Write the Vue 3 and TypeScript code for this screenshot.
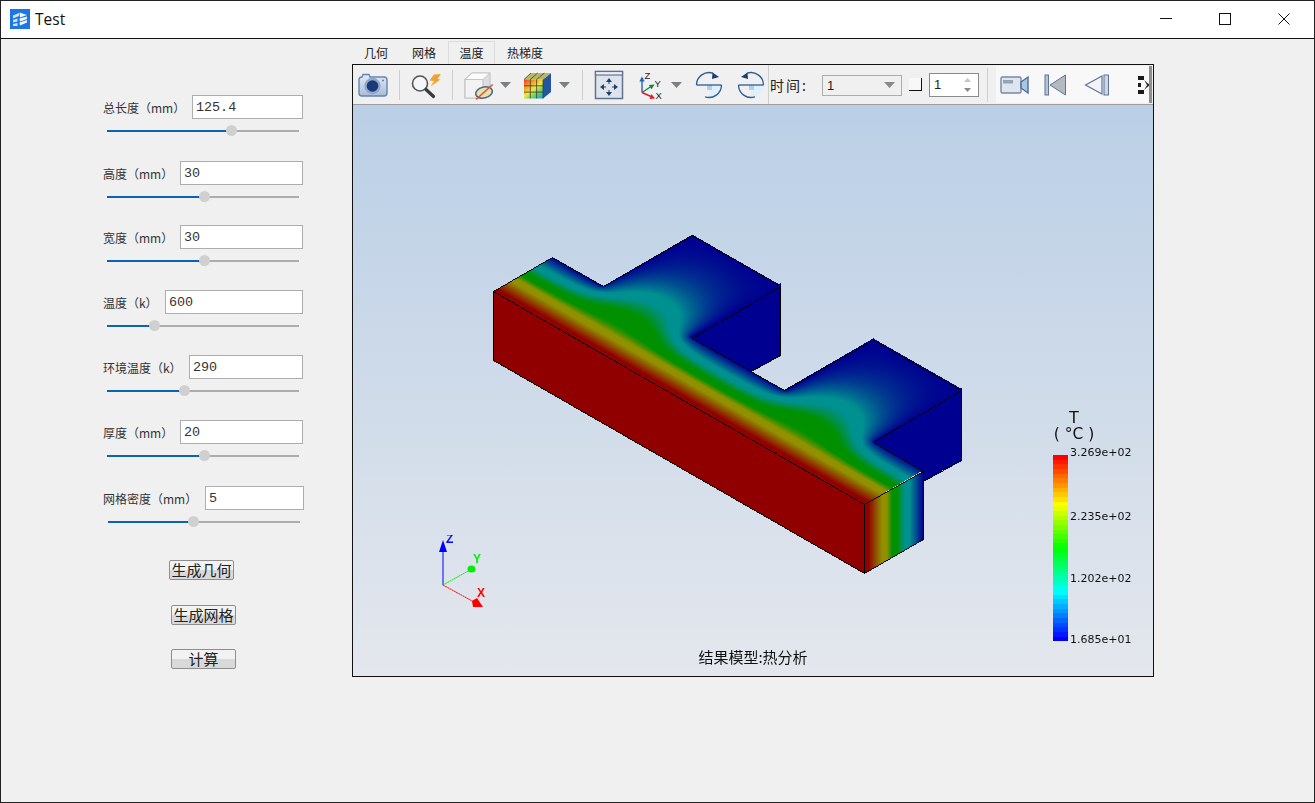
<script setup lang="ts">
import { onMounted, ref } from 'vue'

interface Param {
  label: string
  value: string
  inputWidth: number
  thumb: number
  gap: number
}

const params: Param[] = [
  { label: '总长度（mm）', value: '125.4', inputWidth: 111, thumb: 124, gap: 0 },
  { label: '高度（mm）', value: '30', inputWidth: 123, thumb: 97, gap: 24 },
  { label: '宽度（mm）', value: '30', inputWidth: 123, thumb: 97, gap: 22 },
  { label: '温度（k）', value: '600', inputWidth: 138, thumb: 47, gap: 23 },
  { label: '环境温度（k）', value: '290', inputWidth: 114, thumb: 77, gap: 23 },
  { label: '厚度（mm）', value: '20', inputWidth: 123, thumb: 97, gap: 23 },
  { label: '网格密度（mm）', value: '5', inputWidth: 99, thumb: 85, gap: 24 },
]

type Stops = [number, number[]][]

const LEGEND_STOPS: Stops = [
  [0, [255, 0, 0]],
  [0.26, [255, 255, 0]],
  [0.5, [0, 255, 0]],
  [0.74, [0, 255, 255]],
  [1, [0, 0, 255]],
]

const MODEL_STOPS: Stops = [
  [0, [144, 0, 0]],
  [0.07, [144, 0, 0]],
  [0.3, [144, 144, 0]],
  [0.38, [144, 144, 0]],
  [0.47, [0, 144, 0]],
  [0.55, [0, 144, 0]],
  [0.68, [0, 144, 144]],
  [0.76, [0, 144, 144]],
  [1, [0, 0, 144]],
]

function ramp(p: number, stops: Stops): number[] {
  const t = Math.min(1, Math.max(0, p))
  for (let i = 1; i < stops.length; i++) {
    if (t <= stops[i][0]) {
      const [a, ca] = stops[i - 1]
      const [b, cb] = stops[i]
      const k = (t - a) / (b - a)
      return ca.map((c, n) => c + (cb[n] - c) * k)
    }
  }
  return stops[stops.length - 1][1]
}

const legendBands = Array.from({ length: 40 }, (_, i) => {
  const c = ramp(i / 39, LEGEND_STOPS)
  return `rgb(${Math.round(c[0])},${Math.round(c[1])},${Math.round(c[2])})`
})

const legendLabels = [
  { text: '3.269e+02', gap: 0 },
  { text: '2.235e+02', gap: 47 },
  { text: '1.202e+02', gap: 45 },
  { text: '1.685e+01', gap: 44 },
]

const model = ref<HTMLCanvasElement | null>(null)

// Steady-state temperature over the top face, solved on a grid in (u, v) units of one bar width.
const N = 24
const NU = 150
const NV = 60
const SOURCE = 1.0

function inTabColumn(i: number): boolean {
  return (i > 20 && i < 56) || (i > 94 && i < 130)
}

function isFree(i: number, j: number): boolean {
  if (j <= 0 || j >= NV) return false
  if (j < N) return true
  return inTabColumn(i)
}

function solveField(): Float32Array {
  const W = NU + 1
  const f = new Float32Array(W * (NV + 1))
  for (let i = 0; i <= NU; i++) f[i] = 1
  const omega = 1.88
  const h2 = 1 / (N * N)
  for (let it = 0; it < 500; it++) {
    for (let j = 1; j < NV; j++) {
      const v = j / N
      const s = SOURCE * Math.max(0, 1 - Math.abs(v - 1.15) / 0.45)
      for (let i = 0; i <= NU; i++) {
        if (!isFree(i, j)) continue
        const l = f[j * W + (i === 0 ? 1 : i - 1)]
        const r = f[j * W + (i === NU ? NU - 1 : i + 1)]
        const d = f[(j - 1) * W + i]
        const t = f[(j + 1) * W + i]
        const c = j * W + i
        const q = inTabColumn(i) ? s * h2 : 0
        f[c] += omega * ((l + r + d + t + q) / 4 - f[c])
      }
    }
  }
  return f
}

function inPoly(x: number, y: number, pts: number[][]): boolean {
  let inside = false
  for (let i = 0, j = pts.length - 1; i < pts.length; j = i++) {
    const [xi, yi] = pts[i]
    const [xj, yj] = pts[j]
    if (yi > y !== yj > y && x < ((xj - xi) * (y - yi)) / (yj - yi) + xi) inside = !inside
  }
  return inside
}

function smooth(a: number, b: number, x: number): number {
  const t = Math.min(1, Math.max(0, (x - a) / (b - a)))
  return t * t * (3 - 2 * t)
}

function drawModel(canvas: HTMLCanvasElement) {
  const ctx = canvas.getContext('2d')
  if (!ctx) return
  const img = ctx.createImageData(canvas.width, canvas.height)
  const OX = 353
  const OY = 105
  const field = solveField()
  const W = NU + 1

  const sample = (u: number, v: number): number => {
    const x = Math.min(NU - 0.001, Math.max(0, u * N))
    const y = Math.min(NV - 0.001, Math.max(0, v * N))
    const i = Math.floor(x)
    const j = Math.floor(y)
    const a = x - i
    const b = y - j
    const solved =
      field[j * W + i] * (1 - a) * (1 - b) +
      field[j * W + i + 1] * a * (1 - b) +
      field[(j + 1) * W + i] * (1 - a) * b +
      field[(j + 1) * W + i + 1] * a * b
    // The bands near the heated front edge stay straight; only the far ones bend towards the tabs.
    const k = smooth(0.3, 0.8, v)
    return Math.max(0, 1 - v) * (1 - k) + solved * k
  }

  const set = (x: number, y: number, c: number[]) => {
    const k = ((y - OY) * canvas.width + (x - OX)) * 4
    img.data[k] = c[0]
    img.data[k + 1] = c[1]
    img.data[k + 2] = c[2]
    img.data[k + 3] = 255
  }

  const shade = (T: number): number[] => ramp(1 - T, MODEL_STOPS)

  const O = [493.3, 291.7]
  const eu = [59.36, 34.02]
  const ev = [59.4, -34.4]
  const det = eu[0] * ev[1] - eu[1] * ev[0]

  const front = [[493.3, 291.7], [864.3, 504.3], [864.3, 573.3], [493.3, 360]]
  const end = [[864.3, 504.3], [923.3, 471], [923.3, 539.3], [864.3, 573.3]]
  const side1 = [[692, 335], [780.7, 283.3], [780.7, 355], [745, 375], [692, 345]]
  const side2 = [[873.3, 439.3], [961.7, 387.7], [961.7, 460], [923.3, 481], [923.3, 474], [873.3, 446]]
  const navy = [0, 0, 144]
  const red = [144, 0, 0]

  for (let y = 232; y < 578; y++) {
    for (let x = 490; x < 966; x++) {
      const px = x + 0.5
      const py = y + 0.5
      const dx = px - O[0]
      const dy = py - O[1]
      const u = (dx * ev[1] - dy * ev[0]) / det
      const v = (eu[0] * dy - eu[1] * dx) / det
      const onBar = u >= 0 && u <= 6.25 && v >= 0 && v <= 1
      const onTab = v > 1 && v <= 2.5 && ((u >= 0.85 && u <= 2.35) || (u >= 3.9 && u <= 5.4))
      if (onBar || onTab) set(x, y, shade(sample(u, v)))
      else if (inPoly(px, py, front)) set(x, y, red)
      else if (inPoly(px, py, end)) set(x, y, shade(sample(6.24, (px - 864.3) / 59)))
      else if (inPoly(px, py, side1) || inPoly(px, py, side2)) set(x, y, navy)
    }
  }

  const line = (a: number[], b: number[]) => {
    let x0 = Math.floor(a[0])
    let y0 = Math.floor(a[1])
    const x1 = Math.floor(b[0])
    const y1 = Math.floor(b[1])
    const dx = Math.abs(x1 - x0)
    const dy = -Math.abs(y1 - y0)
    const sx = x0 < x1 ? 1 : -1
    const sy = y0 < y1 ? 1 : -1
    let err = dx + dy
    for (;;) {
      set(x0, y0, [0, 0, 0])
      if (x0 === x1 && y0 === y1) break
      const e2 = 2 * err
      if (e2 >= dy) {
        err += dy
        x0 += sx
      }
      if (e2 <= dx) {
        err += dx
        y0 += sy
      }
    }
  }

  const edges: number[][][] = [
    [[493.3, 291.7], [864.3, 504.3]],
    [[493.3, 291.7], [493.3, 360]],
    [[493.3, 360], [864.3, 573.3]],
    [[864.3, 504.3], [864.3, 573.3]],
    [[864.3, 573.3], [923.3, 539.3]],
    [[923.3, 539.3], [923.3, 471]],
    [[864.3, 504.3], [923.3, 471]],
    [[493.3, 291.7], [552.7, 257.3]],
    [[552.7, 257.3], [603.3, 286.7]],
    [[603.3, 286.7], [692, 235.3]],
    [[692, 235.3], [780.7, 286.3]],
    [[780.7, 286.3], [692, 338]],
    [[780.7, 286.3], [780.7, 355]],
    [[780.7, 355], [751.7, 371]],
    [[692, 338], [784.3, 390.7]],
    [[784.3, 390.7], [873.3, 340]],
    [[873.3, 340], [961.7, 390.7]],
    [[961.7, 390.7], [873.3, 442.3]],
    [[961.7, 390.7], [961.7, 460]],
    [[961.7, 460], [923.3, 481]],
    [[873.3, 442.3], [923.3, 471]],
  ]
  edges.forEach(([a, b]) => line(a, b))
  ctx.putImageData(img, 0, 0)
}

onMounted(() => {
  if (model.value) drawModel(model.value)
})
</script>

<template>
  <div class="window">
    <header class="titlebar">
      <svg class="app-icon" width="20" height="20" viewBox="0 0 20 20">
        <rect width="20" height="20" fill="#1b76e6" />
        <path d="M3 6.5 L9 4 V7 L3 9.5 Z M3 11 L7.5 9.5 V12.5 L3 13.5 Z M3 15 L7.5 14 V17 H3 Z" fill="#cfe3fb" />
        <path d="M9.5 3.5 L17 6 L10 8.5 Z M9.5 9.5 L17 7.5 V10 L10 12.5 Z M9.5 13.5 L17 11 V13.5 L10 16.5 Z" fill="#f2f7ff" />
      </svg>
      <span class="app-title">Test</span>
      <div class="win-controls">
        <div class="win-btn">
          <svg width="12" height="12" viewBox="0 0 12 12"><path d="M0 5.5 H12" stroke="#111" fill="none" /></svg>
        </div>
        <div class="win-btn">
          <svg width="12" height="12" viewBox="0 0 12 12"><rect x="0.5" y="0.5" width="11" height="11" stroke="#111" fill="none" /></svg>
        </div>
        <div class="win-btn">
          <svg width="12" height="12" viewBox="0 0 12 12"><path d="M0.5 0.5 L11.5 11.5 M11.5 0.5 L0.5 11.5" stroke="#111" fill="none" /></svg>
        </div>
      </div>
    </header>

    <main class="content">
      <aside class="params">
        <div
          v-for="(p, i) in params"
          :key="p.label"
          class="field"
          :class="{ wide: i === params.length - 1 }"
          :style="{ marginTop: p.gap + 'px' }"
        >
          <div class="field-row">
            <label class="field-label">{{ p.label }}</label>
            <input class="field-input" :value="p.value" readonly :style="{ width: p.inputWidth + 'px' }" />
          </div>
          <div class="slider">
            <div class="slider-fill" :style="{ width: p.thumb + 'px' }"></div>
            <div class="slider-thumb" :style="{ left: p.thumb - 5 + 'px' }"></div>
          </div>
        </div>
        <button class="action first">生成几何</button>
        <button class="action second">生成网格</button>
        <button class="action third">计算</button>
      </aside>

      <section class="viewer">
        <nav class="tabs">
          <span class="tab">几何</span>
          <span class="tab">网格</span>
          <span class="tab active">温度</span>
          <span class="tab">热梯度</span>
        </nav>
        <div class="frame">
          <div class="toolbar">
            <!-- camera -->
            <svg class="ic-camera" width="30" height="26" viewBox="0 0 30 26">
              <defs>
                <linearGradient id="camBody" x1="0" y1="0" x2="0" y2="1">
                  <stop offset="0" stop-color="#e4ebf5" />
                  <stop offset="1" stop-color="#a9bcd6" />
                </linearGradient>
              </defs>
              <path d="M4 5 L5 2.5 H11 L12 5 H26 Q29 5 29 8 V21 Q29 24 26 24 H4 Q1 24 1 21 V8 Q1 5 4 5 Z" fill="url(#camBody)" stroke="#6485ad" stroke-width="1.4" />
              <circle cx="14.5" cy="14" r="8.2" fill="#8fa9cb" />
              <circle cx="14.5" cy="14" r="5.8" fill="#1c3a78" />
              <circle cx="25" cy="8.5" r="1" fill="#5f7fa8" />
            </svg>
            <i class="sep s1"></i>
            <!-- search with lightning -->
            <svg class="ic-search" width="32" height="30" viewBox="0 0 32 30">
              <circle cx="10" cy="13.5" r="7.5" fill="#f4f6f8" stroke="#555" stroke-width="1.6" />
              <path d="M16 19.5 L23.5 26.5" stroke="#3a3a3a" stroke-width="3.2" stroke-linecap="round" />
              <path d="M24 4.5 L31 4 L27.5 9 L30.5 9.5 L20.5 16.5 L24 11 L19.5 10.5 Z" fill="#f2a32d" />
            </svg>
            <i class="sep s2"></i>
            <!-- clipped cube -->
            <svg class="ic-cube" width="32" height="30" viewBox="0 0 32 30">
              <path d="M1 9.5 L8 3 H26 V20 L19 28 H1 Z" fill="#dcdddf" stroke="#c4c5c7" stroke-width="1.2" />
              <path d="M1 9.5 H19 V28 H1 Z" fill="#f3f3f3" stroke="#c4c5c7" stroke-width="1.2" />
              <path d="M1 9.5 L8 3 H26 L19 9.5 Z" fill="#fbfbfb" stroke="#c4c5c7" stroke-width="1" />
              <ellipse cx="20" cy="22.5" rx="8.5" ry="5.5" transform="rotate(-14 20 22.5)" fill="#eadfae" stroke="#51688c" stroke-width="1.6" />
              <path d="M12 29.5 L28.7 14.5" stroke="#d9502a" stroke-width="1.4" />
            </svg>
            <svg class="ic-arrow a1" width="11" height="6" viewBox="0 0 11 6"><path d="M0 0 H11 L5.5 6 Z" fill="#7c7f84" /></svg>
            <!-- colour cube -->
            <svg class="ic-colorcube" width="30" height="30" viewBox="0 0 30 30">
              <defs>
                <linearGradient id="ccFront" x1="0" y1="0" x2="0.8" y2="1">
                  <stop offset="0" stop-color="#ee3b2e" />
                  <stop offset="0.33" stop-color="#f4a52c" />
                  <stop offset="0.55" stop-color="#eee842" />
                  <stop offset="0.8" stop-color="#5fd06a" />
                  <stop offset="1" stop-color="#34a9cf" />
                </linearGradient>
              </defs>
              <path d="M20 9.5 L28 3 V22 L20 28.5 Z" fill="#24559f" />
              <path d="M1 9.5 L8 3 H28 L20 9.5 Z" fill="#b9b864" />
              <rect x="1" y="9.5" width="19" height="19" fill="url(#ccFront)" />
              <path d="M7.3 9.5 V28.5 M13.6 9.5 V28.5 M1 15.8 H20 M1 22.1 H20 M8 3 L1 9.5 M14.6 3 L7.3 9.5 M21.3 3 L13.6 9.5 M20 9.5 V28.5" stroke="#3b3f2c" stroke-width="0.8" fill="none" />
            </svg>
            <svg class="ic-arrow a2" width="11" height="6" viewBox="0 0 11 6"><path d="M0 0 H11 L5.5 6 Z" fill="#7c7f84" /></svg>
            <i class="sep s3"></i>
            <!-- fit -->
            <svg class="ic-fit" width="30" height="30" viewBox="0 0 30 30">
              <rect x="1.5" y="1.5" width="27" height="27" fill="#dfe4ec" stroke="#5f7391" stroke-width="1.5" />
              <rect x="1.5" y="1.5" width="27" height="3.5" fill="#eef2f7" stroke="#5f7391" stroke-width="1.2" />
              <path d="M15 8 L12 12 H18 Z M15 26 L12 22 H18 Z M6 17 L10 14 V20 Z M24 17 L20 14 V20 Z" fill="#243f6d" />
              <path d="M15 12 V14 M15 20 V22 M10 17 H12 M18 17 H20" stroke="#243f6d" stroke-width="1" />
            </svg>
            <!-- axes -->
            <svg class="ic-axes" width="32" height="30" viewBox="0 0 32 30">
              <path d="M5 22.5 V10" stroke="#2264b8" stroke-width="1.4" />
              <path d="M5 6.5 L2.3 11.5 H7.7 Z" fill="#2264b8" />
              <path d="M5 22.5 L14 16.5" stroke="#14843c" stroke-width="1.4" />
              <path d="M17.5 14.5 L11.8 15 L14.5 19.3 Z" fill="#14843c" />
              <path d="M5 22.5 L14 26.5" stroke="#d8202a" stroke-width="1.4" />
              <path d="M18 28.5 L12.5 29 L14.5 24 Z" fill="#d8202a" />
              <text x="7.5" y="9" class="axis-letter">Z</text>
              <text x="17.5" y="16.5" class="axis-letter">Y</text>
              <text x="18.5" y="29" class="axis-letter">X</text>
            </svg>
            <svg class="ic-arrow a3" width="11" height="6" viewBox="0 0 11 6"><path d="M0 0 H11 L5.5 6 Z" fill="#7c7f84" /></svg>
            <!-- rotate cw -->
            <svg class="ic-rot r1" width="30" height="30" viewBox="0 0 30 30">
              <path d="M15 15 H27.5 A12.5 12.5 0 0 1 15 27.5 Z" fill="#dff0fa" />
              <rect x="13" y="15" width="5" height="5" fill="#a8d3ef" />
              <path d="M2.5 15 H27.5" stroke="#2b5d94" stroke-width="1.3" />
              <path d="M2.5 15 A12.5 12.5 0 0 1 19 3.2" fill="none" stroke="#2b5d94" stroke-width="1.3" />
              <path d="M27.5 15 A12.5 12.5 0 0 1 11 26.8" fill="none" stroke="#2b5d94" stroke-width="1.3" />
              <path d="M18.5 2.5 L25 7 L18 9 Z" fill="#1c3d6e" />
            </svg>
            <!-- rotate ccw -->
            <svg class="ic-rot r2" width="30" height="30" viewBox="0 0 30 30">
              <path d="M15 15 H27.5 A12.5 12.5 0 0 1 15 27.5 Z" fill="#dff0fa" />
              <rect x="13" y="15" width="5" height="5" fill="#a8d3ef" />
              <path d="M2.5 15 H27.5" stroke="#2b5d94" stroke-width="1.3" />
              <path d="M27.5 15 A12.5 12.5 0 0 0 11 3.2" fill="none" stroke="#2b5d94" stroke-width="1.3" />
              <path d="M2.5 15 A12.5 12.5 0 0 0 19 26.8" fill="none" stroke="#2b5d94" stroke-width="1.3" />
              <path d="M11.5 2.5 L5 7 L12 9 Z" fill="#1c3d6e" />
            </svg>
            <i class="sep s4"></i>
            <span class="time-label">时间:</span>
            <div class="combo">
              <span>1</span>
              <svg width="11" height="6" viewBox="0 0 11 6"><path d="M0 0 H11 L5.5 6 Z" fill="#8a8a8a" /></svg>
            </div>
            <div class="check"></div>
            <div class="spin">
              <span>1</span>
              <svg width="7" height="14" viewBox="0 0 7 14">
                <path d="M3.5 0 L7 4 H0 Z" fill="#c4c4c4" />
                <path d="M0 10 H7 L3.5 14 Z" fill="#8a8a8a" />
              </svg>
            </div>
            <i class="sep s5"></i>
            <div class="player">
              <svg class="ic-video" width="30" height="20" viewBox="0 0 30 20">
                <rect x="1" y="2" width="20" height="16" rx="1.5" fill="#dfe5ee" stroke="#7489a8" stroke-width="1.4" />
                <rect x="3" y="5" width="10" height="3.5" fill="#93a4ba" />
                <path d="M21 7 L28 2 V18 L21 13 Z" fill="#a9c6e3" stroke="#4c6d96" stroke-width="1.4" />
              </svg>
              <svg class="ic-first" width="23" height="22" viewBox="0 0 23 22">
                <rect x="1" y="1" width="3.5" height="20" fill="#b9c4d4" stroke="#5d7598" />
                <path d="M21.5 1 V21 L6 11 Z" fill="#b4b9c2" stroke="#5d7598" />
              </svg>
              <svg class="ic-prev" width="26" height="22" viewBox="0 0 26 22">
                <path d="M18 2 V20 L1.5 11 Z" fill="#f2f4f7" stroke="#5d7598" stroke-width="1.2" />
                <rect x="20" y="1" width="4.5" height="20" fill="#cfd6e0" stroke="#5d7598" />
              </svg>
              <svg class="ic-chop" width="12" height="20" viewBox="0 0 12 20">
                <defs>
                  <linearGradient id="chopFade" x1="0" y1="0" x2="1" y2="0">
                    <stop offset="0" stop-color="#555" />
                    <stop offset="1" stop-color="#111" />
                  </linearGradient>
                </defs>
                <path d="M0 1 H6 V5 H0 Z M0 15 H6 V19 H0 Z M0 8 H3 V12 H0 Z" fill="#1a1a1a" />
                <path d="M6 5 L12 10 L6 15 L9 10 Z" fill="url(#chopFade)" />
              </svg>
            </div>
          </div>

          <div class="viewport">
            <canvas ref="model" class="model" width="799" height="571"></canvas>

            <svg class="triad" width="60" height="80" viewBox="0 0 60 80">
              <path d="M15 50 V14" stroke="#0000ff" stroke-width="1" />
              <path d="M15 5 L11 17 H19 Z" fill="#0000ff" />
              <path d="M15 50 L42 35" stroke="#00f000" stroke-width="1" stroke-dasharray="2 0.5" />
              <ellipse cx="43.5" cy="34" rx="4" ry="3.5" fill="#00f000" />
              <path d="M15 50 L46 67" stroke="#ff0000" stroke-width="1" stroke-dasharray="2 0.5" />
              <path d="M44 66 L49 63 L55 72 L45 72 Z" fill="#ff0000" />
              <text x="18" y="8" class="triad-letter blue">Z</text>
              <text x="45" y="28" class="triad-letter green">Y</text>
              <text x="49" y="62" class="triad-letter red">X</text>
            </svg>

            <div class="legend">
              <div class="legend-name">T</div>
              <div class="legend-unit">( °C )</div>
              <div class="legend-body">
                <div class="legend-bar">
                  <div v-for="(c, i) in legendBands" :key="i" class="band" :style="{ background: c }"></div>
                </div>
                <div class="legend-labels">
                  <span v-for="l in legendLabels" :key="l.text" :style="{ marginTop: l.gap + 'px' }">{{ l.text }}</span>
                </div>
              </div>
            </div>

            <div class="caption">结果模型:热分析</div>
          </div>
        </div>
      </section>
    </main>
  </div>
</template>

<style>
html,
body {
  margin: 0;
  background: #222;
  overflow: hidden;
}
</style>

<style scoped>
.window {
  width: 1313px;
  height: 801px;
  margin: 1px 0 0 1px;
  display: flex;
  flex-direction: column;
  background: #f0f0f0;
  font-family: "Noto Sans CJK SC", "Noto Sans", sans-serif;
  color: #222;
}

.titlebar {
  height: 36px;
  flex: none;
  display: flex;
  align-items: center;
  background: #fff;
  border-bottom: 1px solid #111;
  padding-left: 9px;
  padding-bottom: 1px;
}
.app-icon { flex: none; }
.app-title {
  margin-left: 5px;
  font: 15.5px "Open Sans", "Noto Sans", sans-serif;
  color: #111;
}
.win-controls { margin-left: auto; display: flex; padding-right: 1px; }
.win-btn {
  width: 59px;
  height: 36px;
  display: flex;
  align-items: center;
  justify-content: center;
}

.content { flex: 1; display: flex; min-height: 0; }

.params {
  width: 351px;
  flex: none;
  box-sizing: border-box;
  padding: 56px 0 0 102px;
  display: flex;
  flex-direction: column;
  align-items: flex-start;
}
.field { width: 200px; }
.field.wide { width: 201px; }
.field-row {
  display: flex;
  align-items: center;
  justify-content: space-between;
  height: 24px;
}
.field-label { font-size: 12px; color: #333; white-space: nowrap; }
.field-input {
  height: 24px;
  box-sizing: border-box;
  border: 1px solid #adadad;
  background: #fff;
  padding: 1px 3px 0;
  font: 13.4px "Liberation Mono", monospace;
  color: #333;
  outline: none;
}
.slider {
  position: relative;
  width: 192px;
  height: 12px;
  margin: 6px 0 0 4px;
}
.wide .slider { margin-left: 5px; }
.slider::before {
  content: "";
  position: absolute;
  left: 0;
  right: 0;
  top: 5px;
  height: 2px;
  background: #adadad;
}
.slider-fill {
  position: absolute;
  left: 0;
  top: 5px;
  height: 2px;
  background: #0b63b5;
}
.slider-thumb {
  position: absolute;
  top: 0;
  width: 11px;
  height: 11px;
  border-radius: 50%;
  background: #d0d0d0;
}

.action {
  width: 65px;
  height: 20px;
  padding: 0;
  box-sizing: border-box;
  border: 1px solid #8e8e8e;
  border-radius: 2px;
  background: linear-gradient(#f2f2f2 0 50%, #d9d9d9 50% 100%);
  font: 15px "Noto Sans CJK SC", sans-serif;
  line-height: 18px;
  color: #222;
  white-space: nowrap;
}
.action.first { margin: 32px 0 0 66px; }
.action.second { margin: 25px 0 0 68px; }
.action.third { margin: 24px 0 0 68px; }

.viewer { width: 802px; flex: none; padding-top: 2px; }
.tabs { display: flex; height: 23px; }
.tab {
  padding: 0 12px;
  font-size: 12px;
  line-height: 24px;
  color: #222;
  white-space: nowrap;
}
.tab.active {
  box-sizing: border-box;
  padding: 0;
  width: 47px;
  text-align: center;
  border: 1px solid #dcdcdc;
  border-bottom: none;
  line-height: 22px;
}

.frame {
  box-sizing: border-box;
  width: 802px;
  height: 613px;
  border: 1px solid #111;
  display: flex;
  flex-direction: column;
}
.toolbar {
  height: 40px;
  flex: none;
  box-sizing: border-box;
  display: flex;
  align-items: center;
  background: #f0f0f0;
  border-bottom: 1px solid #9c9c9c;
  overflow: hidden;
}
.toolbar svg { flex: none; }
.sep { flex: none; width: 1px; height: 30px; background: #cfcfcf; }

.ic-camera { margin-left: 5px; }
.s1 { margin-left: 11px; }
.ic-search { margin-left: 10px; }
.s2 { margin-left: 10px; }
.ic-cube { margin-left: 11px; }
.a1 { margin-left: 4px; }
.ic-colorcube { margin-left: 12px; }
.a2 { margin-left: 6px; }
.s3 { margin-left: 12px; }
.ic-fit { margin-left: 11px; }
.ic-axes { margin-left: 13px; }
.a3 { margin-left: 2px; }
.r1 { margin-left: 12px; }
.r2 { margin-left: 12px; }
.s4 { margin-left: 2px; height: 39px; }
.axis-letter { font: 9.5px "Liberation Sans", sans-serif; fill: #222; }

.time-label {
  margin-left: 1px;
  width: 36px;
  font-size: 14px;
  letter-spacing: 2px;
  color: #222;
  white-space: nowrap;
}
.combo {
  margin: 1px 0 0 16px;
  width: 80px;
  height: 21px;
  flex: none;
  box-sizing: border-box;
  border: 1px solid #adadad;
  background: #f0f0f0;
  display: flex;
  align-items: center;
  justify-content: space-between;
  padding: 0 6px 0 4px;
  font: 13px "Liberation Sans", sans-serif;
}
.check {
  margin-left: 7px;
  width: 13px;
  height: 13px;
  flex: none;
  box-sizing: border-box;
  border-right: 1px solid #111;
  border-bottom: 1px solid #111;
  background: #f8f8f8;
}
.spin {
  margin-left: 7px;
  width: 50px;
  height: 24px;
  flex: none;
  box-sizing: border-box;
  border: 1px solid #8a8a8a;
  background: #fff;
  display: flex;
  align-items: center;
  justify-content: space-between;
  padding: 0 7px 0 4px;
  font: 13px "Liberation Sans", sans-serif;
}
.s5 { margin-left: 8px; height: 34px; }
.player {
  margin-left: 8px;
  width: 156px;
  height: 37px;
  flex: none;
  box-sizing: border-box;
  background: #f8f8f8;
  border-right: 3px solid #8f8f8f;
  display: flex;
  align-items: center;
  overflow: hidden;
}
.ic-video { margin-left: 4px; }
.ic-first { margin-left: 14px; }
.ic-prev { margin-left: 17px; }
.ic-chop { margin-left: 28px; }

.viewport {
  position: relative;
  flex: 1;
  overflow: hidden;
  background: linear-gradient(#bacfe6, #e4e7ed);
}
.model { position: absolute; left: 0; top: 0; }

.triad { position: absolute; left: 75px; top: 430px; }
.triad-letter { font: bold 12px "Liberation Sans", sans-serif; }
.triad-letter.blue { fill: #0000ff; }
.triad-letter.green { fill: #00f000; }
.triad-letter.red { fill: #ff0000; }

.legend {
  position: absolute;
  left: 700px;
  top: 304px;
  width: 90px;
  color: #111;
}
.legend-name {
  width: 42px;
  text-align: center;
  font: 16px/17px "DejaVu Sans", sans-serif;
}
.legend-unit {
  width: 42px;
  text-align: center;
  white-space: nowrap;
  font: 15.5px/17px "DejaVu Sans", sans-serif;
}
.legend-body { display: flex; margin-top: 12px; }
.legend-bar {
  width: 15px;
  height: 186px;
  display: flex;
  flex-direction: column;
}
.band { flex: 1; }
.legend-labels {
  margin: -11px 0 0 2px;
  display: flex;
  flex-direction: column;
  font: 11px/17px "DejaVu Sans", sans-serif;
}

.caption {
  position: absolute;
  left: 0;
  right: 0;
  bottom: 9px;
  text-align: center;
  font-size: 15px;
  line-height: 20px;
  color: #111;
}
</style>
